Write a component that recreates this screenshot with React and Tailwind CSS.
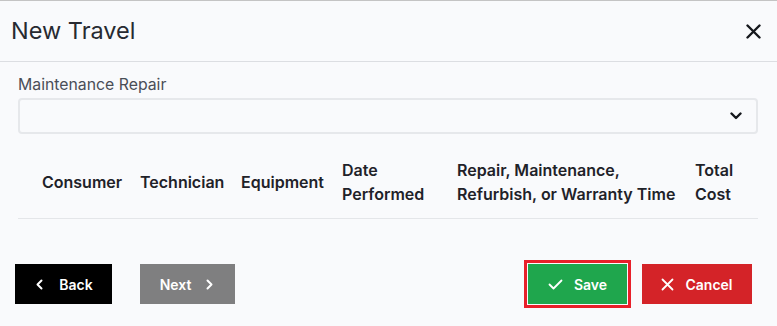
import { useState } from 'react';

export default function App() {
  const [repair, setRepair] = useState('');

  const columns = [
    { label: 'Consumer', w: 'w-[98px]' },
    { label: 'Technician', w: 'w-[101px]' },
    { label: 'Equipment', w: 'w-[101px]' },
    { label: 'Date Performed', w: 'w-[115px]' },
    { label: 'Repair, Maintenance, Refurbish, or Warranty Time', w: 'w-[238px]' },
    { label: 'Total Cost', w: 'flex-1' },
  ];

  return (
    <div className="w-[777px] h-[326px] bg-[#f9fafc] border-t border-[#c4c4c4] font-['Inter',sans-serif] text-[#1f2229] overflow-hidden">

      {/* Header */}
      <div className="h-[61px] flex items-center justify-between pl-[11px] pr-[16px] border-b border-[#dcdee2]">
        <h2 className="text-[23.5px] font-normal text-[#272a31]">New Travel</h2>
        <button className="text-[#16181d]">
          <svg width="15" height="15" viewBox="0 0 15 15" fill="none" stroke="currentColor" strokeWidth="2.4" strokeLinecap="round">
            <path d="M1.5 1.5l12 12M13.5 1.5l-12 12" />
          </svg>
        </button>
      </div>

      {/* Body */}
      <div className="px-[18px] pt-[13px]">
        <label className="block text-[15.8px] text-[#4a4e57] leading-[20px] mb-[3px]">Maintenance Repair</label>
        <div className="relative">
          <select
            value={repair}
            onChange={e => setRepair(e.target.value)}
            className="appearance-none w-[740px] h-[36px] bg-[#f9fafc] border-2 border-[#e6e8eb] rounded-[4px] px-3 text-sm outline-none"
          >
            <option value=""></option>
          </select>
          <svg className="absolute left-[712px] top-[14px] text-[#15171c] pointer-events-none" width="12" height="8" viewBox="0 0 12 8" fill="none" stroke="currentColor" strokeWidth="2.4" strokeLinecap="round" strokeLinejoin="round">
            <path d="M1.5 1.5l4.5 4.5 4.5-4.5" />
          </svg>
        </div>

        {/* Table header */}
        <div className="mt-[12px] w-[740px] flex items-center border-b border-[#e4e6e9] py-[12px] text-[16px] font-semibold leading-[24px] text-[#1f2229]">
          <div className="w-[24px]" />
          {columns.map(c => (
            <div key={c.label} className={`${c.w} pr-1`}>{c.label}</div>
          ))}
        </div>

        {/* Footer buttons */}
        <div className="mt-[45px] flex items-center justify-between -ml-[3px] w-[740px]">
          <div className="flex items-center gap-[28px]">
            <button className="w-[97px] h-[40px] bg-black text-white text-[14px] font-semibold flex items-center justify-center gap-[16px] pl-[2px]">
              <svg width="7" height="11" viewBox="0 0 7 11" fill="none" stroke="currentColor" strokeWidth="2" strokeLinecap="round" strokeLinejoin="round">
                <path d="M5.5 1.5L1.5 5.5l4 4" />
              </svg>
              Back
            </button>
            <button className="w-[95px] h-[40px] bg-[#7f7f80] text-white text-[14px] font-semibold flex items-center justify-center gap-[15px] pr-[2px]">
              Next
              <svg width="7" height="11" viewBox="0 0 7 11" fill="none" stroke="currentColor" strokeWidth="2" strokeLinecap="round" strokeLinejoin="round">
                <path d="M1.5 1.5l4 4-4 4" />
              </svg>
            </button>
          </div>
          <div className="flex items-center gap-[15px] mr-[3px]">
            <button className="w-[99px] h-[40px] bg-[#1fa64d] text-white text-[14px] font-semibold flex items-center justify-center gap-[11px] outline-3 outline-[#e8202a] outline-offset-1">
              <svg width="15" height="11" viewBox="0 0 15 11" fill="none" stroke="currentColor" strokeWidth="1.8" strokeLinecap="round" strokeLinejoin="round">
                <path d="M1.5 5.5l4 4 8-8" />
              </svg>
              Save
            </button>
            <button className="w-[110px] h-[40px] bg-[#d42328] text-white text-[14px] font-semibold flex items-center justify-center gap-[11px]">
              <svg width="13" height="13" viewBox="0 0 13 13" fill="none" stroke="currentColor" strokeWidth="1.8" strokeLinecap="round">
                <path d="M1.5 1.5l10 10M11.5 1.5l-10 10" />
              </svg>
              Cancel
            </button>
          </div>
        </div>
      </div>
    </div>
  );
}
